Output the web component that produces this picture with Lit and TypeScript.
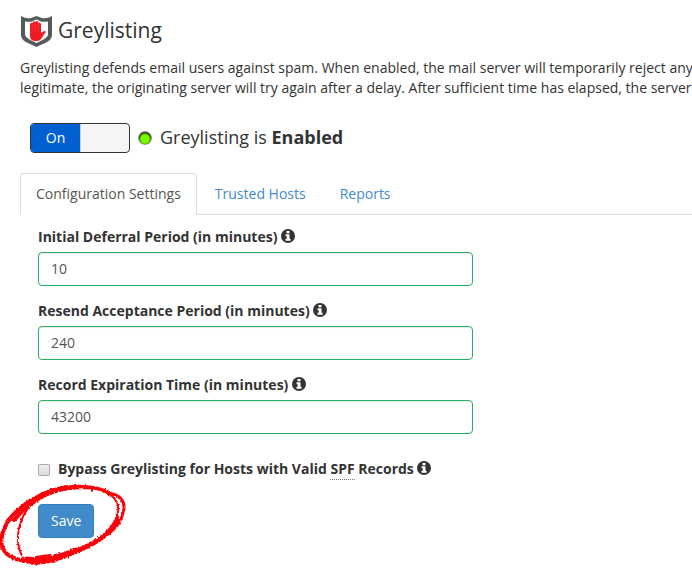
import { LitElement, html, css, svg } from "lit";
import { customElement, state } from "lit/decorators.js";

const infoIcon = html`<svg class="info" viewBox="0 0 14 14" aria-hidden="true">
  <circle cx="7" cy="7" r="7" fill="#333" />
  <path fill="#fff" d="M5.500 2h3v2.300h-3zM4.600 5.300h3.900v4.500h1.100V11.700H4.500V9.800h1.200V7.200H4.600z" />
</svg>`;

@customElement("app-root")
export class AppRoot extends LitElement {
  @state() private enabled = true;

  private fields = [
    { id: "deferral", label: "Initial Deferral Period (in minutes)", value: "10" },
    { id: "resend", label: "Resend Acceptance Period (in minutes)", value: "240" },
    { id: "expiration", label: "Record Expiration Time (in minutes)", value: "43200" },
  ];

  static styles = css`
    :host {
      display: block;
      overflow: hidden;
      background: #fff;
      color: #333;
      font: 14px/20px "Open Sans", sans-serif;
    }
    * { box-sizing: border-box; }
    main { padding: 14px 0 32px 20px; }
    header { display: flex; align-items: center; gap: 6px; height: 34px; }
    .shield { width: 32px; height: 32px; flex: none; }
    h1 { margin: 0; padding-bottom: 2px; font-size: 21px; line-height: 28px; font-weight: 400; }
    .intro { margin: 10px 0 25px; white-space: nowrap; }
    .status { display: flex; align-items: center; gap: 8px; margin-left: 10px; }
    .toggle {
      display: flex;
      width: 100px;
      height: 30px;
      padding: 0;
      border: 1px solid #333;
      border-radius: 4px;
      overflow: hidden;
      background: #f5f5f5;
      color: #fff;
      font: inherit;
    }
    .toggle span {
      width: 50px;
      line-height: 28px;
      background: #0060d0;
      border-right: 1px solid #ccc;
    }
    .light { width: 14px; height: 14px; }
    .status p { margin: 0; padding-bottom: 2px; font-size: 18px; line-height: 24px; }
    nav { display: flex; gap: 2px; margin-top: 20px; border-bottom: 1px solid #ddd; }
    nav a {
      padding: 10px 15px;
      margin-bottom: -1px;
      border: 1px solid transparent;
      border-radius: 4px 4px 0 0;
      color: #428bca;
      text-decoration: none;
    }
    nav a.active { color: #555; background: #fff; border-color: #ddd #ddd #fff; }
    form { padding: 12px 18px 0; }
    .field { display: flex; flex-direction: column; gap: 5px; max-width: 435px; margin-bottom: 15px; }
    label { font-weight: 700; }
    .info { width: 14px; height: 14px; vertical-align: -1px; }
    .text {
      width: 100%;
      height: 34px;
      padding: 5px 12px 7px;
      border: 1px solid #27ae60;
      border-radius: 4px;
      background: #fff;
      box-shadow: inset 0 1px 1px rgba(0, 0, 0, 0.075);
      color: #555;
      font: inherit;
    }
    .check { display: flex; align-items: center; gap: 8px; margin: 25px 0 24px; }
    .check input {
      appearance: none;
      width: 12px;
      height: 12px;
      margin: 0;
      border: 1px solid #aaa;
      border-radius: 2px;
      background: linear-gradient(#eee, #ddd);
    }
    abbr { display: inline-block; border-bottom: 1px dotted #777; text-decoration: none; }
    .actions { position: relative; display: flex; }
    .save {
      padding: 6px 12px;
      border: 1px solid #357ebd;
      border-radius: 4px;
      background: #428bca;
      color: #fff;
      font: inherit;
    }
    .scribble {
      position: absolute;
      left: -38px;
      top: -24px;
      width: 130px;
      height: 90px;
      pointer-events: none;
    }
  `;

  private scribble() {
    return svg`<svg class="scribble" viewBox="0 480 130 90" aria-hidden="true">
      <defs><filter id="rough"><feTurbulence type="fractalNoise" baseFrequency=".5" numOctaves="2" seed="4" /><feDisplacementMap in="SourceGraphic" scale="3" xChannelSelector="R" yChannelSelector="G" /></filter></defs>
      <g filter="url(#rough)" fill="none" stroke="#fb0207" stroke-linecap="round">
        <path stroke-width="4" d="M68 487C44 490 24 503 12 516C0 531 -2 546 7 554C15 561 27 561 38 563" />
        <path stroke-width="4" d="M58 490C36 497 23 509 14 520" />
        <path stroke-width="2" d="M23 558C14 541 18 523 28 508C39 493 64 488 88 488C108 489 120 499 118 512C117 523 108 532 98 539" />
        <path stroke-width="3" d="M66 487C86 485 101 488 110 493C123 496 126 504 123 513C120 526 110 533 98 541" />
        <path stroke-width="5" d="M117 519C113 530 102 539 88 546C68 555 53 562 34 562" />
        <path stroke-width="5" d="M27 559C43 562 62 556 76 550" />
        <path stroke-width="2" d="M36 557L50 555M92 489v2" />
      </g>
    </svg>`;
  }

  render() {
    return html`<main>
      <header>
        <svg class="shield" viewBox="0 0 32 32" aria-hidden="true">
          <path fill="#58595b" d="M1 1Q6 4 11 3Q14 2 16.500 1Q19 2 22 3Q27 4 32 1V20C32 26 25 28 16.500 32C8 28 1 26 1 20Z" />
          <path fill="#fff" d="M5 6.500Q9 7 12 6.500Q15 5 16.500 4.500Q18 5 21 6.500Q24 7 28 6.500V19C28 23 22 25 16.500 28C11 25 5 23 5 19Z" />
          <path fill="#ed1c24" d="M10 9Q11 7 12.500 8V8Q14 5 15.500 7Q17 5 18.500 7V8Q20 7 21 9V18L24 16Q27 16 25 18L21 24Q20 26 17 26H14Q10 25 10 21Z" />
          <path stroke="#f55" stroke-width=".3" d="M12.700 9v7M15.600 8v8M18.500 8v8" />
        </svg>
        <h1>Greylisting</h1>
      </header>
      <p class="intro">
        Greylisting defends email users against spam. When enabled, the mail server will temporarily reject any<br />
        legitimate, the originating server will try again after a delay. After sufficient time has elapsed, the server
      </p>
      <div class="status">
        <button class="toggle" role="switch" aria-checked=${this.enabled} aria-label="Greylisting"
          @click=${() => (this.enabled = !this.enabled)}><span>${this.enabled ? "On" : "Off"}</span></button>
        <svg class="light" viewBox="0 0 14 14" aria-hidden="true">
          <defs><radialGradient id="g" cy=".58"><stop offset=".6" stop-color="#7cfc00" /><stop offset=".82" stop-color="#4b9800" /><stop offset="1" stop-color="#444" /></radialGradient></defs>
          <circle cx="7" cy="7" r="7" fill="#ccc" /><circle cx="7" cy="7" r="6.500" fill="url(#g)" />
        </svg>
        <p>Greylisting is <strong>${this.enabled ? "Enabled" : "Disabled"}</strong></p>
      </div>
      <nav>
        <a class="active" href="#configuration">Configuration Settings</a>
        <a href="#trusted">Trusted Hosts</a>
        <a href="#reports">Reports</a>
      </nav>
      <form @submit=${(e: Event) => e.preventDefault()}>
        ${this.fields.map((f) => html`<div class="field">
          <label for=${f.id}>${f.label} ${infoIcon}</label>
          <input class="text" id=${f.id} type="text" .value=${f.value} />
        </div>`)}
        <div class="check">
          <input id="bypass" type="checkbox" />
          <label for="bypass">Bypass Greylisting for Hosts with Valid <abbr>SPF</abbr> Records ${infoIcon}</label>
        </div>
        <div class="actions"><button class="save" type="submit">Save</button>${this.scribble()}</div>
      </form>
    </main>`;
  }
}
